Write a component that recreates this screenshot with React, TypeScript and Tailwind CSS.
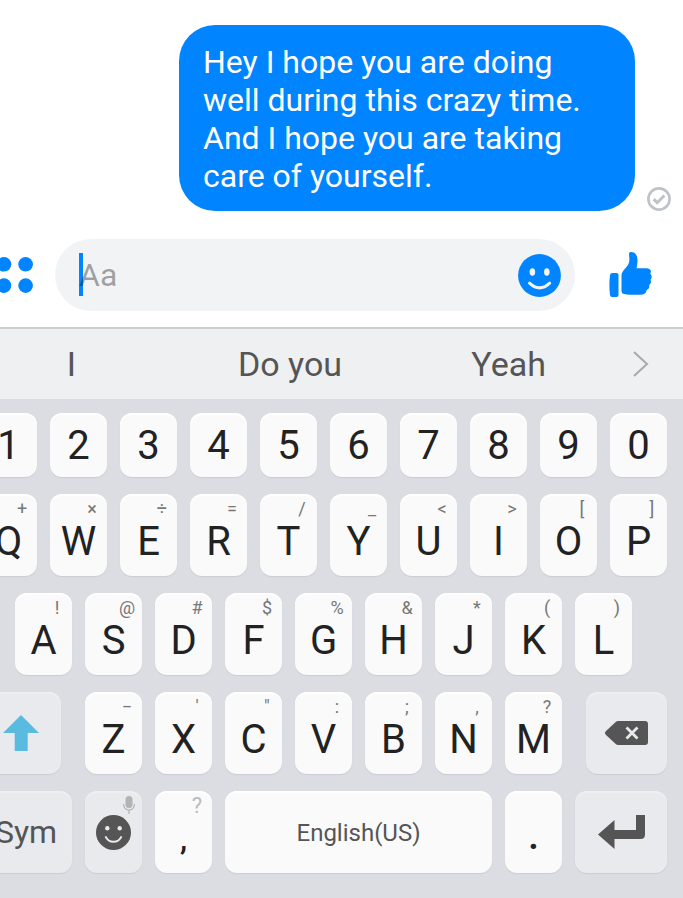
import type { ReactNode } from "react";
import clsx from "clsx";

type KeyData = { label: string; hint?: string };

const NUMBERS: KeyData[] = "1234567890".split("").map((n) => ({ label: n }));

const TOP_ROW: KeyData[] = [
  { label: "Q", hint: "+" },
  { label: "W", hint: "×" },
  { label: "E", hint: "÷" },
  { label: "R", hint: "=" },
  { label: "T", hint: "/" },
  { label: "Y", hint: "_" },
  { label: "U", hint: "<" },
  { label: "I", hint: ">" },
  { label: "O", hint: "[" },
  { label: "P", hint: "]" },
];

const HOME_ROW: KeyData[] = [
  { label: "A", hint: "!" },
  { label: "S", hint: "@" },
  { label: "D", hint: "#" },
  { label: "F", hint: "$" },
  { label: "G", hint: "%" },
  { label: "H", hint: "&" },
  { label: "J", hint: "*" },
  { label: "K", hint: "(" },
  { label: "L", hint: ")" },
];

const BOTTOM_ROW: KeyData[] = [
  { label: "Z", hint: "−" },
  { label: "X", hint: "'" },
  { label: "C", hint: '"' },
  { label: "V", hint: ":" },
  { label: "B", hint: ";" },
  { label: "N", hint: "," },
  { label: "M", hint: "?" },
];

const SUGGESTIONS = ["I", "Do you", "Yeah"];

type KeyProps = {
  children: ReactNode;
  hint?: ReactNode;
  label?: string;
  muted?: boolean;
  className?: string;
};

const Key = ({ children, hint, label, muted, className = "flex-1" }: KeyProps) => (
  <button
    type="button"
    aria-label={label}
    className={clsx(
      "relative flex h-full min-w-0 items-center justify-center rounded-xl",
      muted
        ? "bg-[#e9eaee] text-[#555] shadow-[0_1px_1px_#c9ccd3,inset_0_2px_1px_#eeeff2]"
        : "bg-[#fafafa] text-[#222] shadow-[0_1px_1px_#c9ccd3,inset_0_2px_1px_#fff]",
      className,
    )}
  >
    {hint && (
      <span className="absolute top-[5px] right-0 flex w-[30px] justify-center text-[18px] leading-5 text-[#777]">
        {hint}
      </span>
    )}
    {children}
  </button>
);

const LetterKey = ({ label, hint }: KeyData) => (
  <Key hint={hint}>
    <span className={clsx("text-[40px] leading-10", hint ? "pt-[13px]" : "pt-0.5")}>{label}</span>
  </Key>
);

const Row = ({ children, className = "h-[82px]" }: { children: ReactNode; className?: string }) => (
  <div className={clsx("flex gap-[13px]", className)}>{children}</div>
);

const SentIcon = () => (
  <svg width="24" height="24" viewBox="0 0 24 24" fill="none" stroke="#bec2c9" role="img" aria-label="Sent">
    <circle cx="12" cy="12" r="10.6" strokeWidth="2.6" />
    <path d="M6.600 12.200l3.600 3.500 7.200-7.200" strokeWidth="3" />
  </svg>
);

const DotsIcon = () => (
  <svg width="36" height="36" viewBox="0 0 36 36" fill="#0084ff">
    <circle cx="7" cy="7.3" r="7.3" />
    <circle cx="28.6" cy="7.3" r="7.3" />
    <circle cx="7" cy="28.6" r="7.3" />
    <circle cx="28.6" cy="28.6" r="7.3" />
  </svg>
);

const SmileIcon = () => (
  <svg width="43" height="43" viewBox="0 0 43 43">
    <circle cx="21.5" cy="21.5" r="21.4" fill="#0084ff" />
    <ellipse cx="14.4" cy="18" rx="2.8" ry="3.8" fill="#f1f3f5" />
    <ellipse cx="28.8" cy="18" rx="2.8" ry="3.8" fill="#f1f3f5" />
    <path d="M11.5 29.2q10 9.4 20.2 0" fill="none" stroke="#f1f3f5" strokeWidth="3" strokeLinecap="round" />
  </svg>
);

const LikeIcon = () => (
  <svg width="43" height="46" viewBox="0 0 43 46" fill="#0084ff">
    <path d="M3.5 21h4q2 0 2 2v20q0 2-2 2h-4.500q-1.700 0-2-2-1.200-10 0-20 .3-2 2.500-2z" />
    <path d="M20 1.500q0-1.500 1.800-1.500c4.700 0 6.700 3.600 6.700 8.500 0 3-.4 5.300-1 7.700h9.800c3.200 0 4.900 1.600 4.600 3.600q-.2 1.100-.7 1.900c1.700 1.200 2 4.400.3 6 1 2 .5 4.300-1.300 5.300.6 2.300-.4 4.200-2.500 4.900-.5 3.300-3 4.900-6.500 4.900-6 .2-11.500 0-16-.9-1.700-.3-2.700-1.400-2.700-3V23.500c0-2.600 1.500-4.600 3.200-6.500 3-3.400 4.800-5.700 4.700-9.500z" />
  </svg>
);

const ChevronIcon = () => (
  <svg width="16" height="26" viewBox="0 0 16 26" fill="none" stroke="#a8a9ab" strokeWidth="2">
    <path d="M1 1l13 12L1 25" />
  </svg>
);

const ShiftIcon = () => (
  <svg width="36" height="36" viewBox="0 0 36 36" fill="#59bbe0">
    <path d="M18 0l18 18H24.700v18h-13V18H0z" />
  </svg>
);

const BackspaceIcon = () => (
  <svg width="43" height="24" viewBox="0 0 43 24">
    <path d="M13 0h27q3 0 3 3v18q0 3-3 3H13q-1.200 0-2-.7L1 14q-2-2 0-4L11 .7q.8-.7 2-.7z" fill="#555" />
    <path d="M21.500 6.500l11 11m0-11l-11 11" stroke="#e9eaee" strokeWidth="2.800" />
  </svg>
);

const EmojiKeyIcon = () => (
  <svg width="35" height="35" viewBox="0 0 35 35">
    <circle cx="17.500" cy="17.500" r="17.500" fill="#555" />
    <circle cx="11.300" cy="13.200" r="2.200" fill="#e9eaee" />
    <circle cx="23.700" cy="13.200" r="2.200" fill="#e9eaee" />
    <path d="M9.500 21.300c3.200 7.300 12.800 7.300 16 0" fill="none" stroke="#e9eaee" strokeWidth="2" />
  </svg>
);

const MicIcon = () => (
  <svg className="ml-1" width="12" height="18" viewBox="0 0 12 18" fill="none" stroke="#b2b3b5">
    <rect x="2.500" y="0" width="7" height="12" rx="3.500" fill="#b2b3b5" stroke="none" />
    <path d="M.6 8c0 8 10.800 8 10.800 0M6 14v4" strokeWidth="1.200" />
  </svg>
);

const EnterIcon = () => (
  <svg width="47" height="34" viewBox="0 0 47 34" fill="#555">
    <path d="M38 0h9v19.500q0 4.500-4.500 4.500H16.500v10L0 19.500 16.500 5v10H38z" />
  </svg>
);

export default function App() {
  return (
    <main className="min-h-screen overflow-hidden bg-white font-[Roboto,sans-serif]">
      {/* Conversation */}
      <section className="flex items-end justify-end gap-3 pt-[25px] pr-3 pb-7">
        <p className="max-w-[456px] rounded-[36px] bg-[#0084ff] px-6 pt-[18px] pb-4 text-[32px] leading-[38px] text-white">
          Hey I hope you are doing well during this crazy time. And I hope you are taking care of yourself.
        </p>
        <SentIcon />
      </section>

      {/* Composer */}
      <form className="-ml-[3px] flex items-center gap-[22px] pr-[31px] pb-4" onSubmit={(e) => e.preventDefault()}>
        <button type="button" aria-label="More actions" className="shrink-0">
          <DotsIcon />
        </button>
        <div className="relative flex h-[72px] flex-1 items-center rounded-full bg-[#f1f3f5] pr-[14px] pl-6">
          <span className="absolute top-[14px] left-6 h-[43px] w-1 bg-[#0084ff]" />
          <input
            type="text"
            aria-label="Message"
            placeholder="Aa"
            className="relative min-w-0 flex-1 bg-transparent text-[32px] leading-[38px] caret-[#0084ff] outline-none placeholder:text-black/35"
          />
          <button type="button" aria-label="Emoji">
            <SmileIcon />
          </button>
        </div>
        <button type="button" aria-label="Like" className="ml-3 shrink-0">
          <LikeIcon />
        </button>
      </form>

      {/* Suggestions */}
      <section className="flex h-[72px] items-center border-t-2 border-[#cbccce] bg-[#eff0f2]">
        <div className="-ml-[38px] grid flex-1 grid-cols-3">
          {SUGGESTIONS.map((word) => (
            <button key={word} type="button" className="text-[34px] leading-10 text-[#555]">
              {word}
            </button>
          ))}
        </div>
        <button type="button" aria-label="More suggestions" className="flex w-[65px] pl-[15px]">
          <ChevronIcon />
        </button>
      </section>

      {/* Keyboard */}
      <section className="bg-[#dcdde2] pt-[14px] pb-[25px]">
        <div className="mr-4 -ml-5 flex flex-col gap-[17px]">
          <Row className="h-16">
            {NUMBERS.map((k) => (
              <LetterKey key={k.label} {...k} />
            ))}
          </Row>
          <Row>
            {TOP_ROW.map((k) => (
              <LetterKey key={k.label} {...k} />
            ))}
          </Row>
          <Row className="h-[82px] px-[35px]">
            {HOME_ROW.map((k) => (
              <LetterKey key={k.label} {...k} />
            ))}
          </Row>
          <Row>
            <Key muted label="Shift" className="mr-[11px] w-[81px]">
              <ShiftIcon />
            </Key>
            {BOTTOM_ROW.map((k) => (
              <LetterKey key={k.label} {...k} />
            ))}
            <Key muted label="Backspace" className="ml-[11px] w-[81px]">
              <BackspaceIcon />
            </Key>
          </Row>
          <Row>
            <Key muted className="flex-[92]">
              <span className="text-[32px] leading-[38px]">Sym</span>
            </Key>
            <Key muted label="Emoji keyboard" hint={<MicIcon />} className="flex-[57]">
              <EmojiKeyIcon />
            </Key>
            <Key hint={<span className="text-[22px] text-[#bbb]">?</span>} className="flex-[57]">
              <span className="pt-[13px] text-[32px] leading-10 font-medium">,</span>
            </Key>
            <Key className="flex-[267]">
              <span className="pt-0.5 text-2xl text-[#555]">English(US)</span>
            </Key>
            <Key className="flex-[57]">
              <span className="pt-2 text-[40px] leading-10 font-medium">.</span>
            </Key>
            <Key muted label="Enter" className="flex-[92]">
              <EnterIcon />
            </Key>
          </Row>
        </div>
      </section>
    </main>
  );
}
